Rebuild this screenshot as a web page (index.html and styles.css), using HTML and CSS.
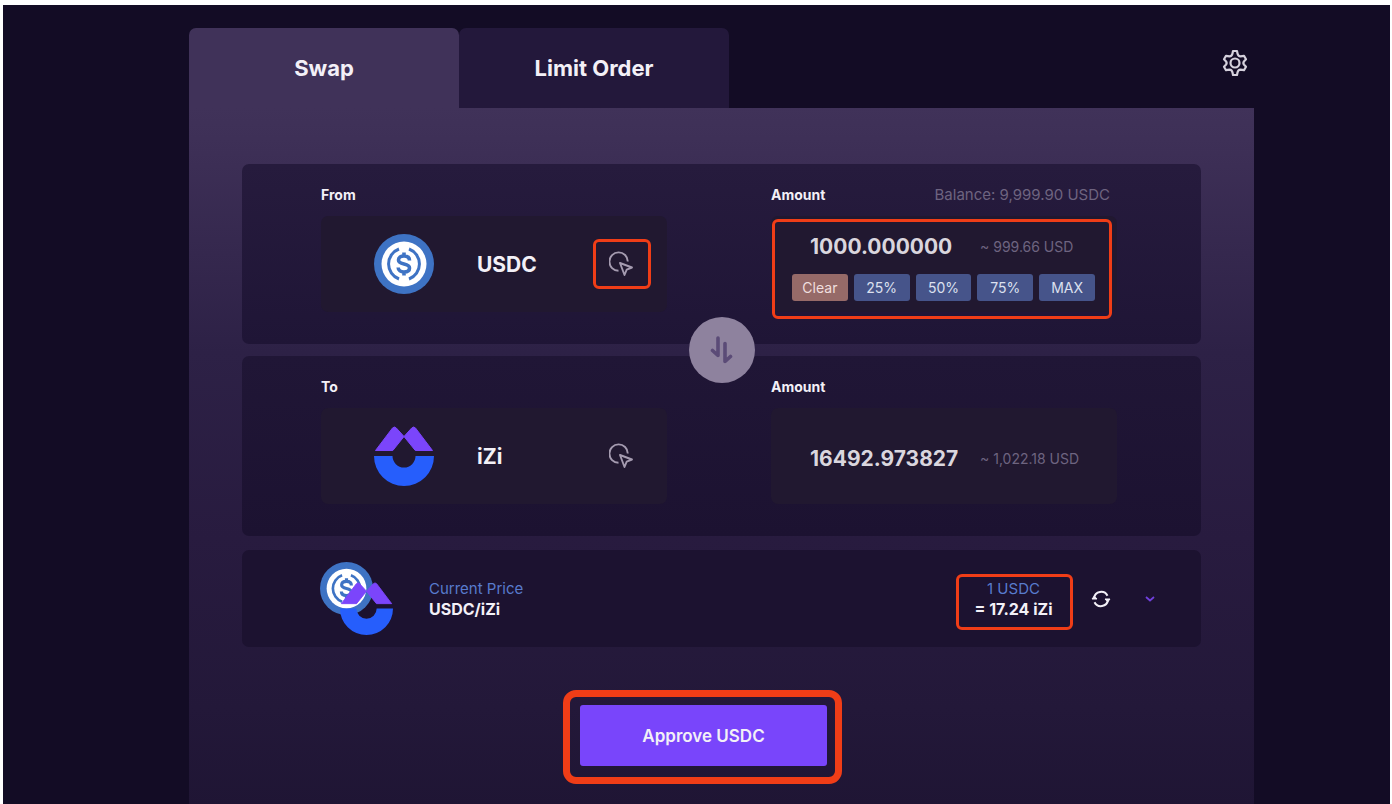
FILE: index.html
```html
<!DOCTYPE html>
<html lang="en">
<head>
    <meta charset="UTF-8">
    <meta name="viewport" content="width=device-width, initial-scale=1.0">
    <title>Swap</title>
    <link rel="stylesheet" href="styles.css">
</head>
<body>

    <!-- shared icons -->
    <svg class="sprite" aria-hidden="true">
        <symbol id="usdc" viewBox="0 0 60 60">
            <circle cx="30" cy="30" r="30" fill="#3e73c4"/>
            <circle cx="30" cy="30" r="22.500" fill="#fff"/>
            <g fill="none" stroke="#3e73c4" stroke-width="3">
                <path d="M25 15a16 16 0 0 0 0 30M35 15a16 16 0 0 1 0 30"/>
                <path d="M35.500 26.500c0-3-2.300-4.500-5.500-4.500s-5.500 1.500-5.500 4c0 5.500 11 2.500 11 8 0 2.600-2.300 4-5.500 4s-5.800-1.500-5.800-4.500M30 18.500v4M30 37.500v4" stroke-width="3.600"/>
            </g>
        </symbol>
        <symbol id="izi" viewBox="0 0 60 60">
            <path d="M1.500 24.500 18.500 2q1.800-2 3.800 0L30 10.500 18.800 24.500zM58.500 24.500 41.500 2q-1.800-2-3.800 0L30 10.500 41.300 24.500z" fill="#7b45fb" stroke="#7b45fb" stroke-width="1" stroke-linejoin="round"/>
            <path d="M0 30h18.500a11.500 11.500 0 0 0 23 0H60a30 30 0 0 1-60 0z" fill="#265efc"/>
        </symbol>
        <symbol id="pick" viewBox="2 1 26 26">
            <g fill="none" stroke="currentColor" stroke-width="1.900" stroke-linejoin="round">
                <path d="M20.800 11.500a9.200 9.200 0 1 0-9.300 9.300"/>
                <path d="M13 13l12 4.500-5.300 2.200-2.200 5.300z"/>
            </g>
        </symbol>
    </svg>

    <main class="page">
        <header class="top-bar">
            <nav class="tabs">
                <button class="tab active">Swap</button>
                <button class="tab">Limit Order</button>
            </nav>
            <button class="icon-button settings" aria-label="Settings">
                <svg width="26" height="28" viewBox="0 0 26 28" fill="none" stroke="currentColor" stroke-width="2.200" stroke-linejoin="round">
                    <path d="M10.500 4.500 11 2h4l.5 2.500q.6 2.800 3 2.900l3.500-.6 2 3.400-1.900 2q-1.500 1.800 0 3.600l1.900 2-2 3.400-3.500-.6q-2.400.1-3 2.900L15 26h-4l-.5-2.500q-.6-2.800-3-2.900l-3.500.6-2-3.400 1.900-2q1.500-1.800 0-3.600L2 10.200l2-3.400 3.500.6q2.400-.1 3-2.900z"/>
                    <circle cx="13" cy="14" r="4.500"/>
                </svg>
            </button>
        </header>

        <section class="panel">
            <div class="swap-cards">
                <div class="card pair">
                    <div class="column">
                        <div class="column-head"><span class="label">From</span></div>
                        <div class="box token">
                            <svg class="token-logo"><use href="#usdc"/></svg>
                            <span class="token-name">USDC</span>
                            <button class="pick highlighted" aria-label="Select token to sell">
                                <svg width="26" height="26"><use href="#pick"/></svg>
                            </button>
                        </div>
                    </div>
                    <div class="column">
                        <div class="column-head">
                            <label class="label" for="fromAmount">Amount</label>
                            <span class="balance">Balance: 9,999.90 USDC</span>
                        </div>
                        <div class="box amount">
                            <div class="value-row">
                                <input class="value" id="fromAmount" type="text" value="1000.000000">
                                <span class="usd">~ 999.66 USD</span>
                            </div>
                            <div class="presets">
                                <button class="preset clear">Clear</button>
                                <button class="preset">25%</button>
                                <button class="preset">50%</button>
                                <button class="preset">75%</button>
                                <button class="preset">MAX</button>
                            </div>
                            <div class="amount-mark"></div>
                        </div>
                    </div>
                </div>

                <button class="switch" aria-label="Switch tokens">
                    <svg width="24" height="28" viewBox="0 0 24 28" fill="none" stroke="currentColor" stroke-width="3.600" stroke-linecap="round" stroke-linejoin="round">
                        <path d="M8 2v17.500l-5.500-5M15 7.500v18l5.500-5"/>
                    </svg>
                </button>

                <div class="card pair to">
                    <div class="column">
                        <div class="column-head"><span class="label">To</span></div>
                        <div class="box token">
                            <svg class="token-logo"><use href="#izi"/></svg>
                            <span class="token-name">iZi</span>
                            <button class="pick" aria-label="Select token to buy">
                                <svg width="26" height="26"><use href="#pick"/></svg>
                            </button>
                        </div>
                    </div>
                    <div class="column">
                        <div class="column-head"><label class="label" for="toAmount">Amount</label></div>
                        <div class="box amount">
                            <div class="value-row">
                                <input class="value" id="toAmount" type="text" value="16492.973827">
                                <span class="usd">~ 1,022.18 USD</span>
                            </div>
                        </div>
                    </div>
                </div>
            </div>

            <div class="card price">
                <div class="pair-logo">
                    <svg><use href="#usdc"/></svg>
                    <svg class="front"><use href="#izi"/></svg>
                </div>
                <div class="price-text">
                    <span class="price-caption">Current Price</span>
                    <strong>USDC/iZi</strong>
                </div>
                <div class="price-text rate">
                    <span class="price-caption">1 USDC</span>
                    <strong>= 17.24 iZi</strong>
                </div>
                <button class="icon-button refresh" aria-label="Refresh price">
                    <svg width="20" height="18" viewBox="0 0 20 18" fill="none" stroke="currentColor" stroke-width="2">
                        <path d="M3 8a7.200 7.200 0 0 1 13.500-2.300M17 10a7.200 7.200 0 0 1-13.500 2.300"/>
                        <path d="M1 9h5L3.300 6zM19 9h-5l2.700 3z" fill="currentColor" stroke-width="1" stroke-linejoin="round"/>
                    </svg>
                </button>
                <button class="icon-button expand" aria-label="Show details">
                    <svg width="10" height="8" viewBox="0 0 10 8" fill="none" stroke="currentColor" stroke-width="1.800">
                        <path d="M1 2l4 3.500L9 2"/>
                    </svg>
                </button>
            </div>

            <div class="actions">
                <div class="approve-mark">
                    <button class="approve">Approve USDC</button>
                </div>
            </div>
        </section>
    </main>

</body>
</html>
```
FILE: styles.css
```css
* {
    box-sizing: border-box;
}
body {
    margin: 0;
    padding: 5px 2px 0 3px;
    background-color: #ffffff;
    color: #f3f0f7;
    font-family: Inter, "Open Sans", sans-serif;
}
button {
    padding: 0;
    border: none;
    background: none;
    color: inherit;
    font-family: inherit;
    cursor: pointer;
}
svg {
    display: block;
}
.sprite {
    position: absolute;
    width: 0;
    height: 0;
}
.page {
    display: flex;
    flex-direction: column;
    min-height: calc(100vh - 5px);
    padding: 23px 136px 0 186px;
    background-color: #130c25;
}
.top-bar {
    display: flex;
    justify-content: space-between;
    align-items: flex-start;
}
.tabs {
    display: flex;
}
.tab {
    width: 270px;
    height: 80px;
    border-radius: 7px 7px 0 0;
    background-color: #23183b;
    font-size: 22px;
    font-weight: 700;
}
.tab.active {
    background-color: #403259;
}
.icon-button {
    display: flex;
    align-items: center;
    justify-content: center;
}
.settings {
    margin: 21px 6px 0 0;
    color: #d5d1dc;
}
.panel {
    flex: 1;
    padding: 56px 53px 20px;
    background: linear-gradient(#403259 0, #3d2f56 45px, #2d2146 245px, #281b3f 430px, #231839 600px, #1f1534 700px);
}
.card {
    border-radius: 7px;
    background: linear-gradient(#261b3d, #1f1536);
}
.card.to {
    background: linear-gradient(#201636, #1c1231);
}
.swap-cards {
    position: relative;
    display: grid;
    gap: 12px;
}
.pair {
    display: grid;
    grid-template-columns: 1fr 1fr;
    gap: 104px;
    padding: 20px 84px 32px 79px;
}
.column-head {
    display: flex;
    align-items: center;
    justify-content: space-between;
    height: 20px;
    margin-bottom: 12px;
    padding-right: 7px;
}
.label {
    font-size: 14px;
    font-weight: 700;
}
.balance,
.usd {
    color: #6e6480;
    font-size: 14px;
    white-space: nowrap;
}
.balance {
    font-size: 15px;
}
.box {
    height: 96px;
    border-radius: 7px;
    background-color: #211830;
}
.token {
    display: flex;
    align-items: center;
    padding: 0 16px 0 53px;
}
.token-logo {
    width: 60px;
    height: 60px;
    margin-right: 43px;
}
.token-name {
    font-size: 21px;
    font-weight: 700;
}
.pick {
    display: flex;
    align-items: center;
    justify-content: center;
    width: 58px;
    height: 50px;
    margin-left: auto;
    border: 3px solid transparent;
    border-radius: 6px;
    color: #a59bb0;
}
.pick.highlighted {
    border-color: #f03d17;
}
.amount {
    position: relative;
    display: flex;
    flex-direction: column;
    justify-content: center;
    gap: 12px;
    padding: 4px 22px 0 21px;
}
.value-row {
    display: flex;
    align-items: center;
    gap: 22px;
    padding-left: 18px;
}
.value {
    width: 148px;
    height: 30px;
    padding: 0;
    border: none;
    background: none;
    color: #dad6de;
    font-family: inherit;
    font-size: 21px;
    font-weight: 700;
}
.presets {
    display: flex;
    gap: 6px;
}
.preset {
    flex: 1;
    height: 27px;
    border-radius: 3px;
    background-color: #46548a;
    color: #dce0ef;
    font-size: 14px;
}
.preset.clear {
    background-color: #966a68;
    color: #f0dfdf;
}
/* sits over the box and hangs a little below it */
.amount-mark {
    position: absolute;
    inset: 3px 5px -7px 1px;
    border: 3px solid #f03d17;
    border-radius: 6px;
    pointer-events: none;
}
.switch {
    position: absolute;
    top: 50%;
    left: 50%;
    display: flex;
    align-items: center;
    justify-content: center;
    width: 66px;
    height: 66px;
    border-radius: 50%;
    background-color: #8e829e;
    color: #5b4b77;
    transform: translate(-50%, -50%);
}
.price {
    display: flex;
    align-items: center;
    height: 97px;
    margin-top: 14px;
    padding: 0 46px 0 78px;
    background: #1c1230;
}
.pair-logo {
    position: relative;
    width: 73px;
    height: 73px;
    margin-right: 36px;
}
.pair-logo svg {
    width: 53px;
    height: 53px;
}
.pair-logo .front {
    position: absolute;
    right: 0;
    bottom: 0;
}
.price-text {
    display: flex;
    flex-direction: column;
    font-size: 16px;
    line-height: 20px;
}
.price-text strong {
    font-weight: 700;
}
.price-caption {
    color: #587bcd;
    font-size: 15px;
}
.rate {
    align-items: center;
    width: 117px;
    margin: 6px 0 0 auto;
    padding: 2px 2px 8px 0;
    border: 3px solid #f03d17;
    border-radius: 6px;
}
.refresh {
    margin-left: 18px;
}
.expand {
    margin-left: 34px;
    color: #7040dc;
}
.actions {
    display: flex;
    justify-content: center;
    margin-top: 43px;
    padding-right: 38px;
}
.approve-mark {
    width: 279px;
    padding: 8px 8px 11px 10px;
    border: 7px solid #f03d17;
    border-radius: 13px;
}
.approve {
    display: block;
    width: 100%;
    height: 61px;
    border-radius: 3px;
    background-color: #7945fb;
    font-size: 17px;
    font-weight: 600;
}
```
